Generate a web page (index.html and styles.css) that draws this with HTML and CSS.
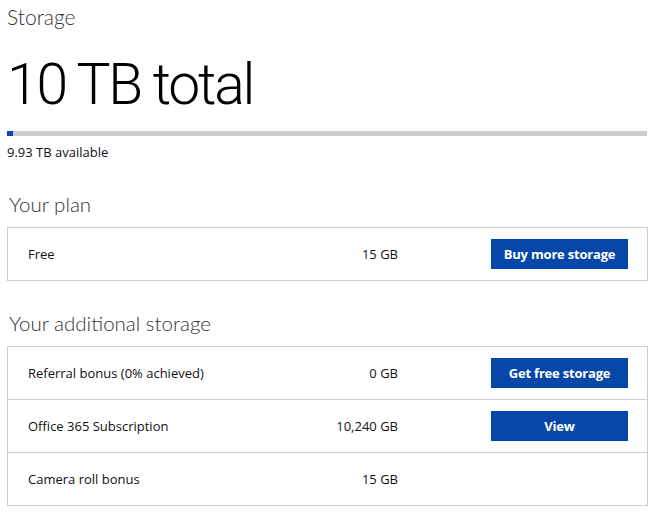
FILE: index.html
```html
<!DOCTYPE html>
<html lang="en">
<head>
<meta charset="utf-8">
<title>Storage</title>
<link rel="stylesheet" href="styles.css">
</head>
<body>
<main class="page">
  <h1 class="title">Storage</h1>
  <div class="total">10 TB total</div>
  <div class="bar"><div class="bar-fill" style="width: 6px"></div></div>
  <div class="available">9.93 TB available</div>

  <h2 class="section">Your plan</h2>
  <div class="box">
    <div class="row">
      <span class="label">Free</span>
      <span class="amount">15 GB</span>
      <a class="btn">Buy more storage</a>
    </div>
  </div>

  <h2 class="section section-2">Your additional storage</h2>
  <div class="box">
    <div class="row">
      <span class="label">Referral bonus (0% achieved)</span>
      <span class="amount">0 GB</span>
      <a class="btn">Get free storage</a>
    </div>
    <div class="row">
      <span class="label">Office 365 Subscription</span>
      <span class="amount">10,240 GB</span>
      <a class="btn">View</a>
    </div>
    <div class="row">
      <span class="label">Camera roll bonus</span>
      <span class="amount">15 GB</span>
      <span class="btn-empty"></span>
    </div>
  </div>
</main>
</body>
</html>
```
FILE: styles.css
```css
* { box-sizing: border-box; }
html, body { margin: 0; padding: 0; background: #fff; }
body {
  font-family: "Open Sans", "Noto Sans", "Liberation Sans", sans-serif;
  color: #000;
}
.page {
  padding: 0 4px 0 7px;
  display: flex;
  flex-direction: column;
}
.title {
  margin: 3px 0 0 0;
  font-family: Lato, "Open Sans", sans-serif;
  font-size: 21px;
  font-weight: 300;
  line-height: 28px;
  color: #333;
}
.total {
  margin-top: 14px;
  font-family: Roboto, Lato, sans-serif;
  font-size: 57px;
  font-weight: 300;
  line-height: 80px;
  color: #000;
  letter-spacing: -2.2px;
}
.bar {
  margin-top: 6px;
  height: 5px;
  width: 640px;
  background: #cccccc;
}
.bar-fill {
  height: 100%;
  background: #0747a9;
}
.available {
  margin-top: 8px;
  font-size: 13px;
  line-height: 16px;
  color: #111;
}
.section {
  margin: 30px 0 0 2px;
  font-family: Lato, "Open Sans", sans-serif;
  font-size: 20.5px;
  font-weight: 300;
  line-height: 28px;
  color: #333;
}
.section-2 { margin-top: 28px; }
.box {
  margin-top: 9px;
  width: 641px;
  border: 1px solid #cccccc;
}
.row {
  display: grid;
  grid-template-columns: 1fr auto 137px;
  align-items: center;
  height: 52px;
  padding: 0 19px 0 20px;
  font-size: 13px;
  color: #111;
}
.row + .row { border-top: 1px solid #cccccc; height: 53px; }
.amount { margin-right: 93px; text-align: right; }
.btn {
  display: flex;
  align-items: center;
  justify-content: center;
  height: 30px;
  background: #0747a9;
  color: #fff;
  font-weight: 700;
  font-size: 13px;
  letter-spacing: -0.2px;
}
.btn-empty { height: 30px; }
```
